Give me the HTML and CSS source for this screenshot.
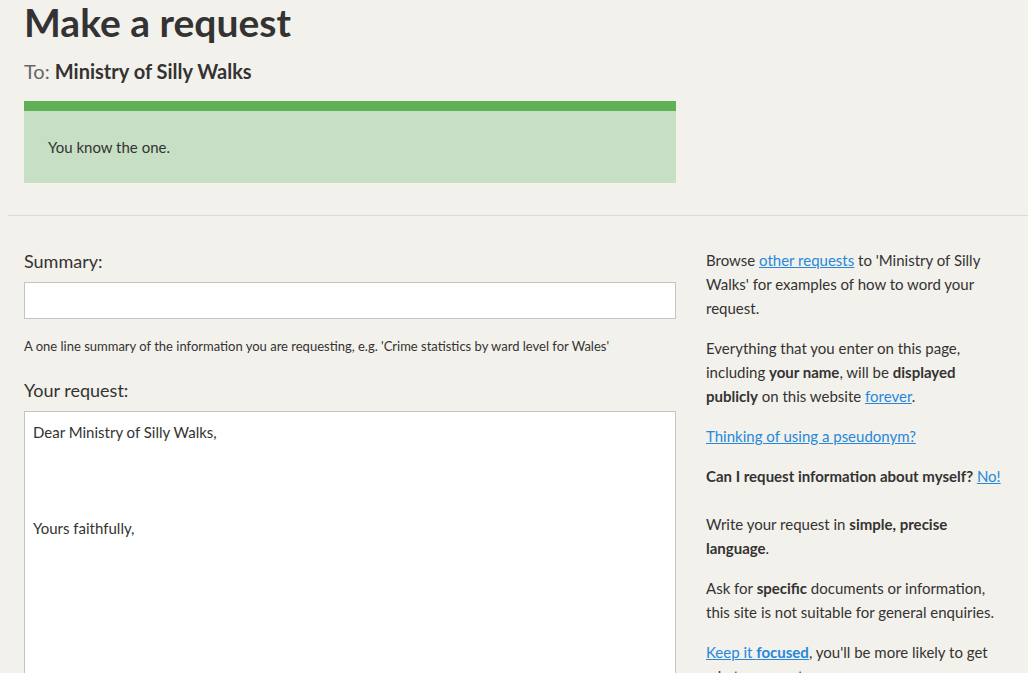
FILE: index.html
```html
<!DOCTYPE html>
<html lang="en">
<head>
<meta charset="utf-8">
<title>Make a request</title>
<link rel="stylesheet" href="styles.css">
</head>
<body>
<div class="top">
  <h1 class="title">Make a request</h1>
  <p class="to"><span class="to-label">To:</span> <strong>Ministry of Silly Walks</strong></p>
  <div class="notice">
    <p>You know the one.</p>
  </div>
</div>
<hr class="divider">
<div class="main">
  <form class="form">
    <label class="label" for="summary">Summary:</label>
    <input class="field" id="summary" type="text">
    <p class="help">A one line summary of the information you are requesting, e.g. 'Crime statistics by ward level for Wales'</p>
    <label class="label" for="body">Your request:</label>
    <textarea class="area" id="body">Dear Ministry of Silly Walks,



Yours faithfully,</textarea>
  </form>
  <aside class="side">
    <p>Browse <a href="#">other requests</a> to 'Ministry of Silly Walks' for examples of how to word your request.</p>
    <p>Everything that you enter on this page, including <strong>your name</strong>, will be <strong>displayed publicly</strong> on this website <a href="#">forever</a>.</p>
    <p><a href="#">Thinking of using a pseudonym?</a></p>
    <p class="gap"><strong>Can I request information about myself?</strong> <a href="#">No!</a></p>
    <p>Write your request in <strong>simple, precise language</strong>.</p>
    <p>Ask for <strong>specific</strong> documents or information, this site is not suitable for general enquiries.</p>
    <p><a href="#">Keep it <strong>focused</strong></a>, you'll be more likely to get what you want.</p>
  </aside>
</div>
</body>
</html>
```

FILE: styles.css
```css
html, body {
  margin: 0;
  padding: 0;
}
body {
  background: #f3f1eb;
  color: #333333;
  font-family: Lato, "Noto Sans", sans-serif;
  font-size: 15px;
  line-height: 24px;
  overflow: hidden;
}
.top {
  padding: 0 24px;
  width: 652px;
}
.title {
  margin: 0;
  padding-top: 0;
  font-size: 39px;
  line-height: 44px;
  font-weight: 700;
  color: #333;
}
.to {
  margin: 13px 0 16px;
  font-size: 20px;
  line-height: 28px;
}
.to-label {
  color: #666;
}
.notice {
  background: #c7dfc5;
  border-top: 10px solid #5fb157;
  padding: 24px 24px;
}
.notice p {
  margin: 0;
  font-size: 15px;
  line-height: 24px;
}
.divider {
  margin: 32px 0 0 8px;
  border: 0;
  border-top: 1px solid #dcdad4;
  height: 0;
}
.main {
  display: flex;
  gap: 30px;
  padding: 0 24px;
}
.form {
  width: 652px;
  flex: none;
  display: flex;
  flex-direction: column;
  padding-top: 33px;
}
.label {
  font-size: 18px;
  line-height: 24px;
  color: #333;
}
.field {
  margin-top: 9px;
  height: 37px;
  box-sizing: border-box;
  border: 1px solid #c4c4c4;
  background: #fff;
  font: inherit;
}
.help {
  margin: 15px 0 20px;
  font-size: 13px;
  line-height: 24px;
}
.area {
  margin-top: 9px;
  height: 400px;
  box-sizing: border-box;
  border: 1px solid #c4c4c4;
  background: #fff;
  padding: 8px 8px;
  font: inherit;
  font-size: 15px;
  line-height: 24px;
  color: #333;
  resize: none;
}
.side {
  flex: 1;
  padding-top: 32px;
}
.side p {
  margin: 0 0 16px;
}
.side p.gap {
  margin-bottom: 24px;
}
.side a {
  color: #2688dc;
}
```
